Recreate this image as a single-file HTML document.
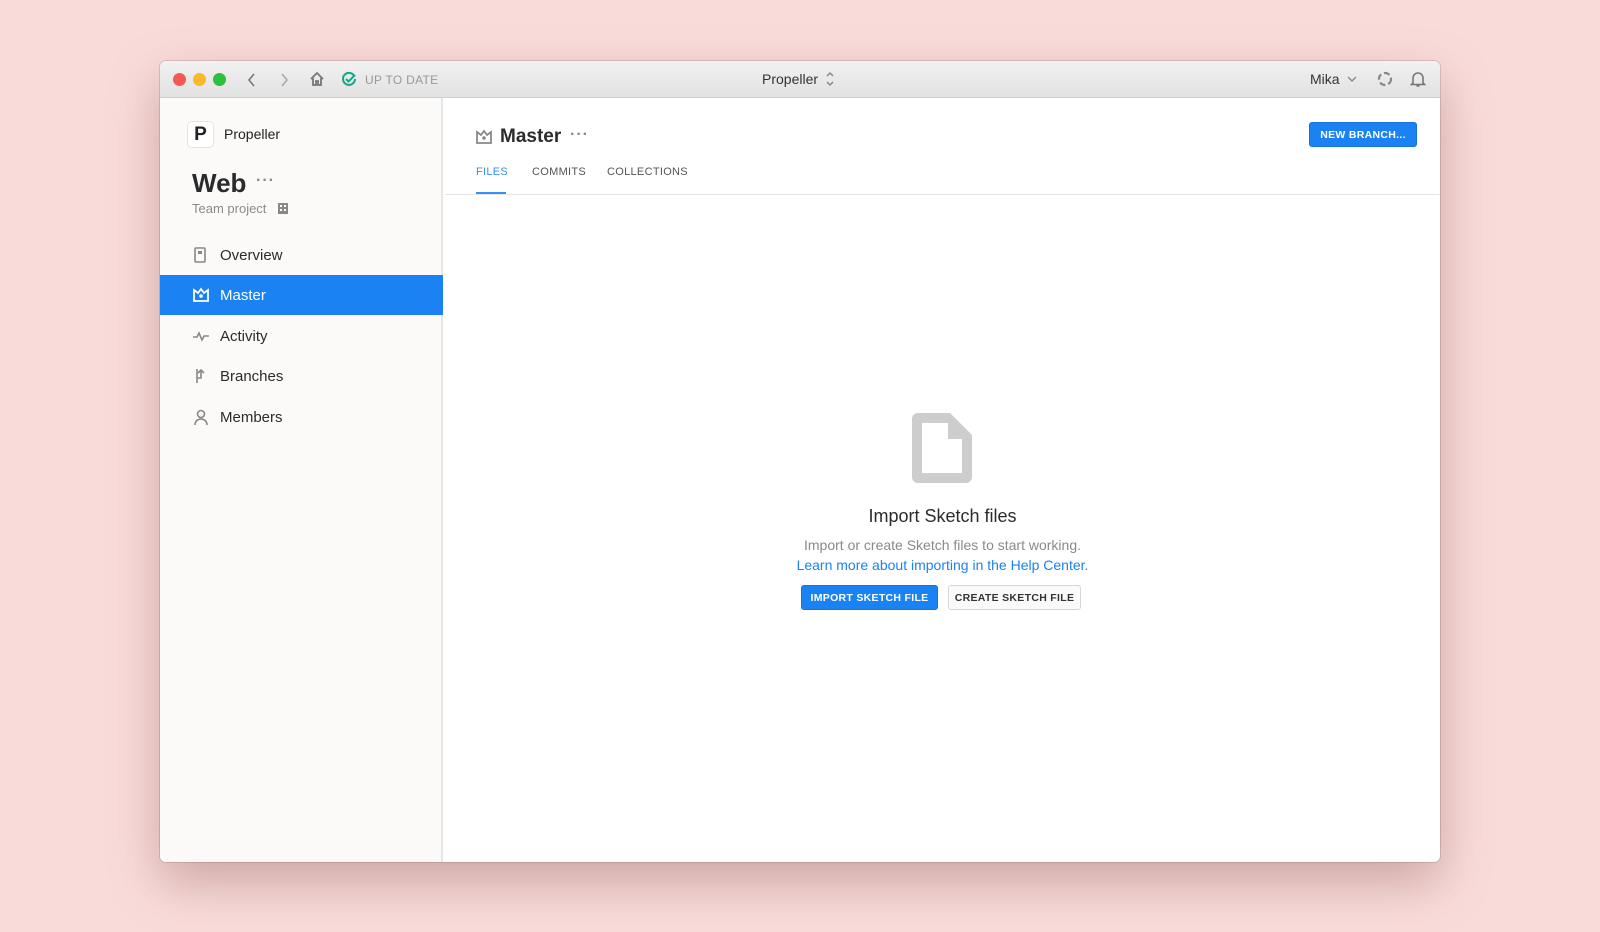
<!DOCTYPE html>
<html><head><meta charset="utf-8"><style>
*{margin:0;padding:0;box-sizing:border-box}
body{width:1600px;height:932px;background:#f9dcda;font-family:"Liberation Sans",sans-serif;position:relative;overflow:hidden;color:#2b2b2b}
.win{position:absolute;left:160px;top:61px;width:1280px;height:801px;background:#fff;border-radius:6px;overflow:hidden;box-shadow:0 20px 50px rgba(120,60,60,.35),0 0 0 1px rgba(0,0,0,.12)}
.tb{position:absolute;left:0;top:0;right:0;height:37px;background:linear-gradient(#f1f1f1,#e2e2e2);border-bottom:1px solid #cfcfcf}
.a{position:absolute}
.dot{position:absolute;top:12px;width:13px;height:13px;border-radius:50%}
.side{position:absolute;left:0;top:37px;width:283px;bottom:0;background:#fbfaf9;border-right:2px solid #e6e6e6}
.nav{position:absolute;left:0;width:283px;height:40px;font-size:15px;display:flex;align-items:center;padding-left:60px}
.nav svg{position:absolute;left:32px}
.btn{position:absolute;font-size:10.5px;font-weight:bold;letter-spacing:.3px;display:flex;align-items:center;justify-content:center;border-radius:3px}
</style></head><body>
<div class="win">
 <div class="tb">
  <div class="dot" style="left:13px;background:#f25a52"></div>
  <div class="dot" style="left:33px;background:#f9b92d"></div>
  <div class="dot" style="left:53px;background:#2bc040"></div>
  <svg class="a" style="left:87px;top:11px" width="10" height="16"><path d="M7 2L2 8l5 6" stroke="#777" stroke-width="1.6" fill="none"/></svg>
  <svg class="a" style="left:119px;top:11px" width="10" height="16"><path d="M3 2l5 6-5 6" stroke="#aaa" stroke-width="1.6" fill="none"/></svg>
  <svg class="a" style="left:149px;top:10px" width="16" height="16"><path d="M2 8L8 2l6 6M4 7v7h3v-4h2v4h3V7" stroke="#777" stroke-width="1.8" fill="none"/></svg>
  <svg class="a" style="left:181px;top:10px" width="16" height="16"><path d="M13.5 5.5A6 6 0 1 0 14 8" stroke="#17a589" stroke-width="2" fill="none"/><path d="M5 8l2.5 2.5L14 4" stroke="#17a589" stroke-width="2" fill="none"/></svg>
  <div class="a" style="left:205px;top:12px;font-size:12px;color:#999;letter-spacing:.3px">UP TO DATE</div>
  <div class="a" style="left:602px;top:10px;font-size:14px;color:#333">Propeller</div>
  <svg class="a" style="left:665px;top:8px" width="10" height="20"><path d="M2 7l3-3 3 3M2 13l3 3 3-3" stroke="#888" stroke-width="1.5" fill="none"/></svg>
  <div class="a" style="left:1150px;top:10px;font-size:14px;color:#333">Mika</div>
  <svg class="a" style="left:1187px;top:14px" width="10" height="8"><path d="M1 2l4 4 4-4" stroke="#888" stroke-width="1.4" fill="none"/></svg>
  <svg class="a" style="left:1217px;top:10px" width="16" height="16"><circle cx="8" cy="8" r="6" stroke="#888" stroke-width="2.2" fill="none" stroke-dasharray="6 3"/><circle cx="8" cy="8" r="2.5" fill="#e8e8e8"/></svg>
  <svg class="a" style="left:1250px;top:9px" width="16" height="18"><path d="M3 13V8a5 5 0 0 1 10 0v5l1.5 1.5h-13zM6.5 16h3" stroke="#777" stroke-width="1.6" fill="none"/></svg>
 </div>
 <div class="side">
  <div class="a" style="left:28px;top:24px;width:25px;height:25px;background:#fff;border-radius:4px;box-shadow:0 0 0 1px #e3e3e3;font-weight:bold;font-size:19px;text-align:center;line-height:25px;color:#222">P</div>
  <div class="a" style="left:64px;top:28px;font-size:14px;color:#222">Propeller</div>
  <div class="a" style="left:32px;top:70px;font-size:26px;font-weight:bold;color:#2b2b2b">Web</div>
  <div class="a" style="left:96px;top:74px;font-size:16px;color:#888;letter-spacing:1px;font-weight:bold">···</div>
  <div class="a" style="left:32px;top:103px;font-size:13px;color:#8a8a8a">Team project</div>
  <svg class="a" style="left:117px;top:104px" width="12" height="13"><rect x="1" y="1" width="10" height="11" fill="#888"/><rect x="3" y="3" width="2" height="2" fill="#fff"/><rect x="7" y="3" width="2" height="2" fill="#fff"/><rect x="3" y="7" width="2" height="2" fill="#fff"/><rect x="7" y="7" width="2" height="2" fill="#fff"/></svg>
  <div class="nav" style="top:137px"><svg width="16" height="18"><rect x="3" y="2" width="10" height="14" rx="1" stroke="#888" stroke-width="1.6" fill="none"/><path d="M6 5h4v3H6z" fill="#888"/></svg>Overview</div>
  <div class="nav" style="top:177px;background:#1a82f2;color:#fff"><svg width="18" height="18"><path d="M2 4l4 3 3-4 3 4 4-3v11H2z" stroke="#fff" stroke-width="1.8" fill="none"/><circle cx="9" cy="10" r="1.8" fill="#fff"/></svg>Master</div>
  <div class="nav" style="top:218px"><svg width="18" height="18"><path d="M1 10h4l2-4 3 7 2-4h5" stroke="#888" stroke-width="1.6" fill="none"/></svg>Activity</div>
  <div class="nav" style="top:258px"><svg width="18" height="18"><path d="M5 2v14M5 11h4V3M6 6l3-3 3 3" stroke="#888" stroke-width="1.6" fill="none"/></svg>Branches</div>
  <div class="nav" style="top:299px"><svg width="18" height="18"><circle cx="9" cy="6" r="3.5" stroke="#888" stroke-width="1.6" fill="none"/><path d="M3 17c0-4 3-6 6-6s6 2 6 6" stroke="#888" stroke-width="1.6" fill="none"/></svg>Members</div>
 </div>
 <div class="a" style="left:285px;top:37px;right:0;bottom:0">
  <svg class="a" style="left:30px;top:30px" width="18" height="18"><path d="M2 4l4 3 3-4 3 4 4-3v11H2z" stroke="#888" stroke-width="1.8" fill="none"/><circle cx="9" cy="10" r="1.8" fill="#888"/></svg>
  <div class="a" style="left:55px;top:28px;font-size:19px;font-weight:bold;color:#2b2b2b">Master</div>
  <div class="a" style="left:125px;top:28px;font-size:16px;color:#888;font-weight:bold;letter-spacing:1px">···</div>
  <div class="btn" style="left:864px;top:24px;width:108px;height:25px;background:#1a82f2;color:#fff;border:1px solid #1673db">NEW BRANCH...</div>
  <div class="a" style="left:31px;top:68px;font-size:11px;color:#3a8ff0;letter-spacing:.3px">FILES</div>
  <div class="a" style="left:31px;top:94px;width:30px;height:2px;background:#3a8ff0"></div>
  <div class="a" style="left:87px;top:68px;font-size:11px;color:#555;letter-spacing:.3px">COMMITS</div>
  <div class="a" style="left:162px;top:68px;font-size:11px;color:#555;letter-spacing:.3px">COLLECTIONS</div>
  <div class="a" style="left:0;top:96px;right:0;height:1px;background:#e4e4e4"></div>
  <svg class="a" style="left:467px;top:315px" width="60" height="70"><path d="M6 0h32l22 22v42a6 6 0 0 1-6 6H6a6 6 0 0 1-6-6V6a6 6 0 0 1 6-6z" fill="#cdcdcd"/><path d="M10 10h26v16h14v34H10z" fill="#fff"/></svg>
  <div class="a" style="left:0;right:0;top:408px;text-align:center;font-size:18px;color:#2b2b2b">Import Sketch files</div>
  <div class="a" style="left:0;right:0;top:439px;text-align:center;font-size:14px;color:#8a8a8a">Import or create Sketch files to start working.</div>
  <div class="a" style="left:0;right:0;top:459px;text-align:center;font-size:14px;color:#1a82f2">Learn more about importing in the Help Center.</div>
  <div class="btn" style="left:356px;top:487px;width:137px;height:25px;background:#1a82f2;color:#fff;border:1px solid #1673db">IMPORT SKETCH FILE</div>
  <div class="btn" style="left:503px;top:487px;width:133px;height:25px;background:#fafafa;color:#333;border:1px solid #d6d6d6">CREATE SKETCH FILE</div>
 </div>
</div>
</body></html>
